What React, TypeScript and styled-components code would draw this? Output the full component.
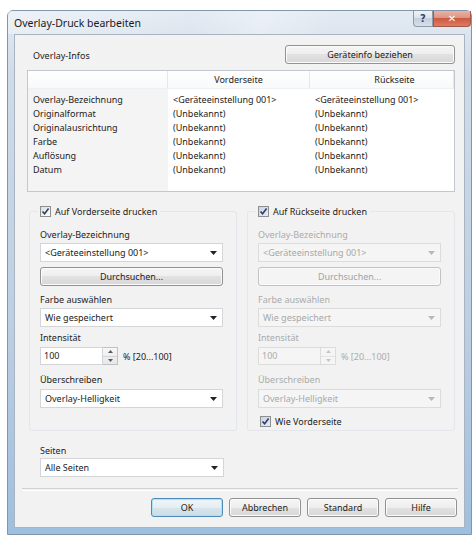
import React from 'react';
import styled, { createGlobalStyle } from 'styled-components';

const GlobalStyle = createGlobalStyle`
  html, body {
    margin: 0;
    padding: 0;
    background: #fff;
  }
  body {
    font-family: "Noto Sans", "DejaVu Sans", sans-serif;
    font-size: 9px;
    color: #222;
  }
`;

const FACE = '#f2f2f2';

const Window = styled.div`
  box-sizing: border-box;
  margin: 10px 0 0 7px;
  width: 465px;
  height: 525px;
  display: flex;
  flex-direction: column;
  border: 1px solid #8296ab;
  border-radius: 6px 6px 0 0;
  background: linear-gradient(180deg, #e4ebf3 0%, #cfdbe8 12%, #bccfe3 60%, #9fbfe0 100%);
`;

const TitleBar = styled.div`
  height: 23px;
  display: flex;
  align-items: center;
  padding-left: 6px;
  background: linear-gradient(100deg, rgba(255,255,255,0.35) 0%, rgba(255,255,255,0) 40%, rgba(255,255,255,0.3) 55%, rgba(255,255,255,0) 70%);
`;

const Title = styled.span`
  flex: 1;
  font-size: 10.5px;
  color: #1a1a1a;
`;

const CaptionButtons = styled.div`
  align-self: flex-start;
  display: flex;
`;

const CaptionButton = styled.div<{ $close?: boolean }>`
  box-sizing: border-box;
  width: ${p => (p.$close ? 38 : 20)}px;
  height: 16px;
  display: flex;
  align-items: center;
  justify-content: center;
  border: 1px solid ${p => (p.$close ? '#a4584a' : '#8d9aab')};
  border-top: none;
  border-radius: ${p => (p.$close ? '0 0 4px 0' : '0 0 0 4px')};
  background: ${p =>
    p.$close
      ? 'linear-gradient(180deg, #eab2a5 0%, #dc9583 45%, #cd5a42 50%, #dc7b60 100%)'
      : 'linear-gradient(180deg, #eef2f6 0%, #dbe3ec 45%, #c3cfdc 50%, #d6e0ea 100%)'};
  color: ${p => (p.$close ? '#fff' : '#34465e')};
  font-family: "DejaVu Sans", sans-serif;
  font-weight: bold;
  font-size: 10px;
`;

const Client = styled.div`
  flex: 1;
  margin: 0 6px 6px 6px;
  border: 1px solid #aab4c0;
  background: ${FACE};
  display: flex;
  flex-direction: column;
  padding: 10px 9px 0 12px;
`;

const InfoHeader = styled.div`
  display: flex;
  justify-content: space-between;
  height: 18px;
`;

const InfoLabel = styled.span`
  align-self: flex-end;
  margin-left: 6px;
  line-height: 14px;
`;

const Button = styled.div<{ $w?: number; $default?: boolean; $disabled?: boolean }>`
  box-sizing: border-box;
  width: ${p => (p.$w ? `${p.$w}px` : '100%')};
  height: 19px;
  display: flex;
  align-items: center;
  justify-content: center;
  border-radius: 3px;
  border: 1px solid ${p => (p.$disabled ? '#bfc3c7' : p.$default ? '#4a8bbb' : '#929292')};
  box-shadow: inset 0 0 0 1px ${p => (p.$default ? '#b4e0f3' : '#fbfbfb')};
  background: ${p =>
    p.$disabled
      ? '#f4f4f4'
      : p.$default
      ? 'linear-gradient(180deg, #eef5f9 0%, #e5eef3 50%, #d7e4eb 50%, #cddde6 100%)'
      : 'linear-gradient(180deg, #f5f5f5 0%, #eeeeee 50%, #e2e2e2 50%, #d7d7d7 100%)'};
  color: ${p => (p.$disabled ? '#a3a3a3' : '#222')};
`;

const Table = styled.div`
  box-sizing: border-box;
  margin-top: 7px;
  height: 122px;
  border: 1px solid #c3c8ce;
  display: grid;
  grid-template-columns: 140px 142px 1fr;
  grid-template-rows: 22px;
  grid-auto-rows: 14px;
  align-content: start;
  background: linear-gradient(90deg, #f4f4f4 140px, #fff 140px);
`;

const HeadCell = styled.div<{ $shift?: number }>`
  height: 17px;
  line-height: 17px;
  text-align: center;
  padding-left: ${p => p.$shift ?? 0}px;
  background: linear-gradient(180deg, #ffffff 0%, #f8f9fa 100%);
  border-right: 1px solid #e4e7eb;
  border-bottom: 1px solid #eef0f2;
`;

const Cell = styled.div`
  padding-left: 5px;
  line-height: 14px;
  white-space: nowrap;
`;

const Sides = styled.div`
  margin-top: 19px;
  display: grid;
  grid-template-columns: 208px 208px;
  column-gap: 10px;
  margin-left: 2px;
`;

const Group = styled.div`
  box-sizing: border-box;
  border: 1px solid #e3e6ea;
  border-radius: 3px;
  padding: 0 13px 2px 10px;
  display: flex;
  flex-direction: column;
`;

const CheckRow = styled.div<{ $legend?: boolean }>`
  align-self: flex-start;
  display: flex;
  align-items: center;
  gap: 4px;
  height: 14px;
  margin: ${p => (p.$legend ? '-8px 0 0 -2px' : '6px 0 0 0')};
  padding: 0 3px 0 2px;
  background: ${FACE};
`;

const Box = styled.div<{ $tint?: boolean }>`
  box-sizing: border-box;
  width: 11px;
  height: 11px;
  border: 1px solid #8e8f8f;
  background: ${p =>
    p.$tint
      ? 'linear-gradient(135deg, #c9d3ea 0%, #e6ebf6 100%)'
      : 'linear-gradient(135deg, #dcdcdc 0%, #ffffff 100%)'};
  display: flex;
  align-items: center;
  justify-content: center;
`;

const Label = styled.div<{ $mt: number; $disabled?: boolean }>`
  margin-top: ${p => p.$mt}px;
  line-height: 14px;
  color: ${p => (p.$disabled ? '#ababab' : '#222')};
`;

const Combo = styled.div<{ $mt?: number; $disabled?: boolean }>`
  box-sizing: border-box;
  margin-top: ${p => p.$mt ?? 0}px;
  width: 100%;
  height: 19px;
  display: flex;
  align-items: center;
  justify-content: space-between;
  padding: 0 5px 0 4px;
  border: 1px solid ${p => (p.$disabled ? '#dcdcdc' : '#d3d5d9')};
  background: ${p => (p.$disabled ? '#f5f5f5' : '#fff')};
  color: ${p => (p.$disabled ? '#a8a8a8' : '#222')};
`;

const Spin = styled.div<{ $disabled?: boolean }>`
  margin-top: 2px;
  display: flex;
  align-items: center;
  color: ${p => (p.$disabled ? '#ababab' : '#222')};
`;

const SpinInput = styled.div<{ $disabled?: boolean }>`
  box-sizing: border-box;
  width: 63px;
  height: 18px;
  line-height: 16px;
  padding-left: 3px;
  border: 1px solid ${p => (p.$disabled ? '#dcdcdc' : '#d3d5d9')};
  background: ${p => (p.$disabled ? '#f5f5f5' : '#fff')};
`;

const SpinButtons = styled.div<{ $disabled?: boolean }>`
  box-sizing: border-box;
  width: 15px;
  height: 18px;
  display: flex;
  flex-direction: column;
  border: 1px solid ${p => (p.$disabled ? '#dcdcdc' : '#bec2c7')};
  border-left: none;
  background: ${p => (p.$disabled ? '#f5f5f5' : 'linear-gradient(180deg, #f7f7f7, #e8e8e8)')};
  & > div {
    flex: 1;
    display: flex;
    align-items: center;
    justify-content: center;
  }
  & > div + div {
    border-top: 1px solid ${p => (p.$disabled ? '#e4e4e4' : '#d0d3d7')};
  }
`;

const Range = styled.span`
  margin-left: 5px;
`;

const Seiten = styled.div`
  margin-left: 13px;
  width: 184px;
  display: flex;
  flex-direction: column;
`;

const Separator = styled.div`
  margin: 11px -3px 0 -5px;
  height: 1px;
  border-top: 1px solid #d2d2d2;
  border-bottom: 1px solid #ffffff;
`;

const ButtonRow = styled.div`
  margin: 7px -2px 0 0;
  display: flex;
  justify-content: flex-end;
  gap: 6px;
`;

const Arrow = ({ disabled }: { disabled?: boolean }) => (
  <svg width="7" height="4" viewBox="0 0 7 4">
    <path d="M0 0 H7 L3.5 4 Z" fill={disabled ? '#b8b8b8' : '#222'} />
  </svg>
);

const SmallArrow = ({ up, disabled }: { up?: boolean; disabled?: boolean }) => (
  <svg width="5" height="3" viewBox="0 0 5 3">
    <path d={up ? 'M0 3 H5 L2.5 0 Z' : 'M0 0 H5 L2.5 3 Z'} fill={disabled ? '#c4c4c4' : '#5a5a5a'} />
  </svg>
);

const Check = ({ tint, label, legend }: { tint?: boolean; label: string; legend?: boolean }) => (
  <CheckRow $legend={legend}>
    <Box $tint={tint}>
      <svg width="9" height="9" viewBox="0 0 9 9">
        <path d="M1.5 4.5 L3.6 6.8 L7.6 1.6" fill="none" stroke="#2f3f5e" strokeWidth="1.6" />
      </svg>
    </Box>
    <span>{label}</span>
  </CheckRow>
);

const rows: [string, string, string][] = [
  ['Overlay-Bezeichnung', '<Geräteeinstellung 001>', '<Geräteeinstellung 001>'],
  ['Originalformat', '(Unbekannt)', '(Unbekannt)'],
  ['Originalausrichtung', '(Unbekannt)', '(Unbekannt)'],
  ['Farbe', '(Unbekannt)', '(Unbekannt)'],
  ['Auflösung', '(Unbekannt)', '(Unbekannt)'],
  ['Datum', '(Unbekannt)', '(Unbekannt)'],
];

type SideProps = { disabled?: boolean; title: string; tint?: boolean; mirror?: boolean };

const SidePanel = ({ disabled, title, tint, mirror }: SideProps) => (
  <Group>
    <Check legend tint={tint} label={title} />
    <Label $mt={10} $disabled={disabled}>Overlay-Bezeichnung</Label>
    <Combo $mt={1} $disabled={disabled}>
      <span>&lt;Geräteeinstellung 001&gt;</span>
      <Arrow disabled={disabled} />
    </Combo>
    <div style={{ marginTop: 5 }}>
      <Button $disabled={disabled}>Durchsuchen...</Button>
    </div>
    <Label $mt={7} $disabled={disabled}>Farbe auswählen</Label>
    <Combo $mt={1} $disabled={disabled}>
      <span>Wie gespeichert</span>
      <Arrow disabled={disabled} />
    </Combo>
    <Label $mt={4} $disabled={disabled}>Intensität</Label>
    <Spin $disabled={disabled}>
      <SpinInput $disabled={disabled}>100</SpinInput>
      <SpinButtons $disabled={disabled}>
        <div><SmallArrow up disabled={disabled} /></div>
        <div><SmallArrow disabled={disabled} /></div>
      </SpinButtons>
      <Range>% [20...100]</Range>
    </Spin>
    <Label $mt={8} $disabled={disabled}>Überschreiben</Label>
    <Combo $mt={2} $disabled={disabled}>
      <span>Overlay-Helligkeit</span>
      <Arrow disabled={disabled} />
    </Combo>
    {mirror && <Check tint label="Wie Vorderseite" />}
  </Group>
);

export default function App() {
  return (
    <>
      <GlobalStyle />
      <Window>
        <TitleBar>
          <Title>Overlay-Druck bearbeiten</Title>
          <CaptionButtons>
            <CaptionButton>?</CaptionButton>
            <CaptionButton $close>✕</CaptionButton>
          </CaptionButtons>
        </TitleBar>
        <Client>
          <InfoHeader>
            <InfoLabel>Overlay-Infos</InfoLabel>
            <Button $w={170}>Geräteinfo beziehen</Button>
          </InfoHeader>
          <Table>
            <HeadCell />
            <HeadCell>Vorderseite</HeadCell>
            <HeadCell $shift={26}>Rückseite</HeadCell>
            {rows.map(r =>
              r.map((c, i) => <Cell key={r[0] + i}>{c}</Cell>)
            )}
          </Table>
          <Sides>
            <SidePanel title="Auf Vorderseite drucken" />
            <SidePanel title="Auf Rückseite drucken" tint disabled mirror />
          </Sides>
          <Seiten>
            <Label $mt={13}>Seiten</Label>
            <Combo>
              <span>Alle Seiten</span>
              <Arrow />
            </Combo>
          </Seiten>
          <Separator />
          <ButtonRow>
            <Button $w={72} $default>OK</Button>
            <Button $w={72}>Abbrechen</Button>
            <Button $w={72}>Standard</Button>
            <Button $w={72}>Hilfe</Button>
          </ButtonRow>
        </Client>
      </Window>
    </>
  );
}
